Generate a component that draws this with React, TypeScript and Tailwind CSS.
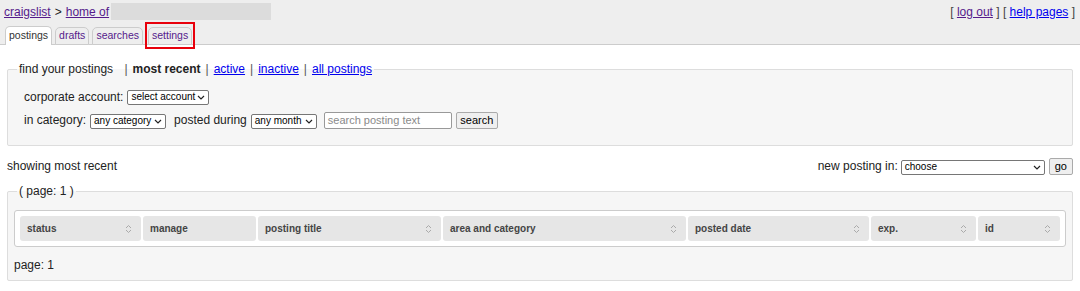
const font = { fontFamily: '"Liberation Sans", Arial, sans-serif' };

function Chevron() {
    return (
        <svg width="8" height="5" viewBox="0 0 8 5" className="shrink-0">
            <polyline points="1,1 4,4 7,1" fill="none" stroke="#222" strokeWidth="1.2" />
        </svg>
    );
}

function SortIcon() {
    return (
        <svg width="7" height="10" viewBox="0 0 7 10" className="shrink-0">
            <polyline points="1,4 3.5,1.5 6,4" fill="none" stroke="#aaa" strokeWidth="1" />
            <polyline points="1,6 3.5,8.5 6,6" fill="none" stroke="#aaa" strokeWidth="1" />
        </svg>
    );
}

function FakeSelect({ label, width }: { label: string; width: string }) {
    return (
        <span
            className={`inline-flex h-[15px] items-center justify-between whitespace-nowrap rounded-[2px] border border-[#767676] bg-white pl-[3px] pr-[3px] text-[10px] leading-none text-black ${width}`}
        >
            <span>{label}</span>
            <Chevron />
        </span>
    );
}

function Pipe() {
    return <span className="mx-[5px] text-[#555]">|</span>;
}

const columns = [
    { name: "status", w: "w-[121px]", sort: true },
    { name: "manage", w: "w-[113px]", sort: false },
    { name: "posting title", w: "w-[183px]", sort: true },
    { name: "area and category", w: "w-[243px]", sort: true },
    { name: "posted date", w: "w-[181px]", sort: true },
    { name: "exp.", w: "w-[105px]", sort: true },
    { name: "id", w: "flex-1", sort: true },
];

const tabBase = "flex items-center rounded-t-[5px] border border-[#cccccc] px-[3px] text-[10.5px]";

export default function App() {
    return (
        <div style={font} className="h-[291px] w-[1080px] bg-white text-[12px] text-[#222]">
            {/* header */}
            <div className="border-b border-[#cccccc] bg-[#eeeeee] pt-[3px]">
                <div className="flex h-[17px] items-center justify-between pl-[4px] pr-[5px] text-[12px]">
                    <div className="flex items-center">
                        <a className="text-[#551a8b] underline">craigslist</a>
                        <span className="mx-[4px]">&gt;</span>
                        <a className="text-[#551a8b] underline">home of</a>
                        <span className="ml-[2px] h-[17px] w-[160px] bg-[#dcdcdc]" />
                    </div>
                    <div className="text-[#444]">
                        [ <a className="text-[#551a8b] underline">log out</a> ] [{" "}
                        <a className="text-[#0000ee] underline">help pages</a> ]
                    </div>
                </div>
                <div className="-mb-px mt-[6px] flex items-end gap-[3px] px-[5px]">
                    <span className={`${tabBase} h-[19px] border-b-0 bg-white text-[#333]`}>postings</span>
                    <span className={`${tabBase} h-[18px] bg-[#eeeeee] text-[#551a8b]`}>drafts</span>
                    <span className={`${tabBase} h-[18px] bg-[#eeeeee] text-[#551a8b]`}>searches</span>
                    <span className="relative ml-[2px] flex">
                        <span className={`${tabBase} h-[18px] bg-[#eeeeee] text-[#551a8b]`}>settings</span>
                        {/* highlight box */}
                        <span className="absolute -bottom-[4px] -left-[3px] -right-[3px] -top-[5px] border-2 border-[#e8000b]" />
                    </span>
                </div>
            </div>

            <div className="px-[7px]">
                {/* find your postings */}
                <fieldset className="mt-[17px] rounded-[2px] border border-[#dddddd] bg-[#f6f6f6] px-[9px] pb-[16px]">
                    <legend className="px-[2px] text-[12px] leading-[15px]">
                        find your postings <span className="ml-[3px]" />
                        <Pipe />
                        <b className="text-[#222]">most recent</b>
                        <Pipe />
                        <a className="text-[#0000ee] underline">active</a>
                        <Pipe />
                        <a className="text-[#0000ee] underline">inactive</a>
                        <Pipe />
                        <a className="text-[#0000ee] underline">all postings</a>
                    </legend>
                    <div className="pl-[7px] pt-[11px]">
                        <div className="flex h-[18px] items-center gap-[4px]">
                            <span>corporate account:</span>
                            <FakeSelect label="select account" width="w-[82px]" />
                        </div>
                        <div className="mt-[5px] flex h-[18px] items-center">
                            <span>in category:</span>
                            <span className="ml-[4px]">
                                <FakeSelect label="any category" width="w-[76px]" />
                            </span>
                            <span className="ml-[8px]">posted during</span>
                            <span className="ml-[4px]">
                                <FakeSelect label="any month" width="w-[66px]" />
                            </span>
                            <span className="ml-[7px] flex h-[17px] w-[128px] items-center rounded-[2px] border border-[#999] bg-white px-[3px] text-[11px] text-[#8a8a8a]">
                                search posting text
                            </span>
                            <span className="ml-[4px] flex h-[17px] w-[42px] items-center justify-center rounded-[2px] border border-[#aaa] bg-[#efefef] text-[11px] text-black">
                                search
                            </span>
                        </div>
                    </div>
                </fieldset>

                {/* showing row */}
                <div className="mt-[11px] flex h-[18px] items-center justify-between">
                    <span>showing most recent</span>
                    <div className="flex items-center">
                        <span>new posting in:</span>
                        <span className="ml-[3px]">
                            <FakeSelect label="choose" width="w-[144px]" />
                        </span>
                        <span className="ml-[4px] flex h-[17px] items-center rounded-[2px] border border-[#aaa] bg-[#efefef] px-[5px] text-[11px] text-black">
                            go
                        </span>
                    </div>
                </div>

                {/* results */}
                <fieldset className="mt-[9px] rounded-[2px] border border-[#dddddd] bg-[#f6f6f6] px-[6px] pb-[6px]">
                    <legend className="ml-[3px] px-[2px] text-[12px] leading-[15px]">( page: 1 )</legend>
                    <div className="mt-[11px] flex gap-[2px] rounded-[3px] border border-[#cccccc] bg-white p-[5px]">
                        {columns.map((c) => (
                            <div
                                key={c.name}
                                className={`flex h-[25px] items-center justify-between rounded-[3px] bg-[#e6e6e6] pl-[7px] pr-[9px] text-[10px] font-bold text-[#444] ${c.w}`}
                            >
                                <span>{c.name}</span>
                                {c.sort && <SortIcon />}
                            </div>
                        ))}
                    </div>
                    <div className="mt-[9px] flex h-[18px] items-center">page: 1</div>
                </fieldset>
            </div>
        </div>
    );
}
